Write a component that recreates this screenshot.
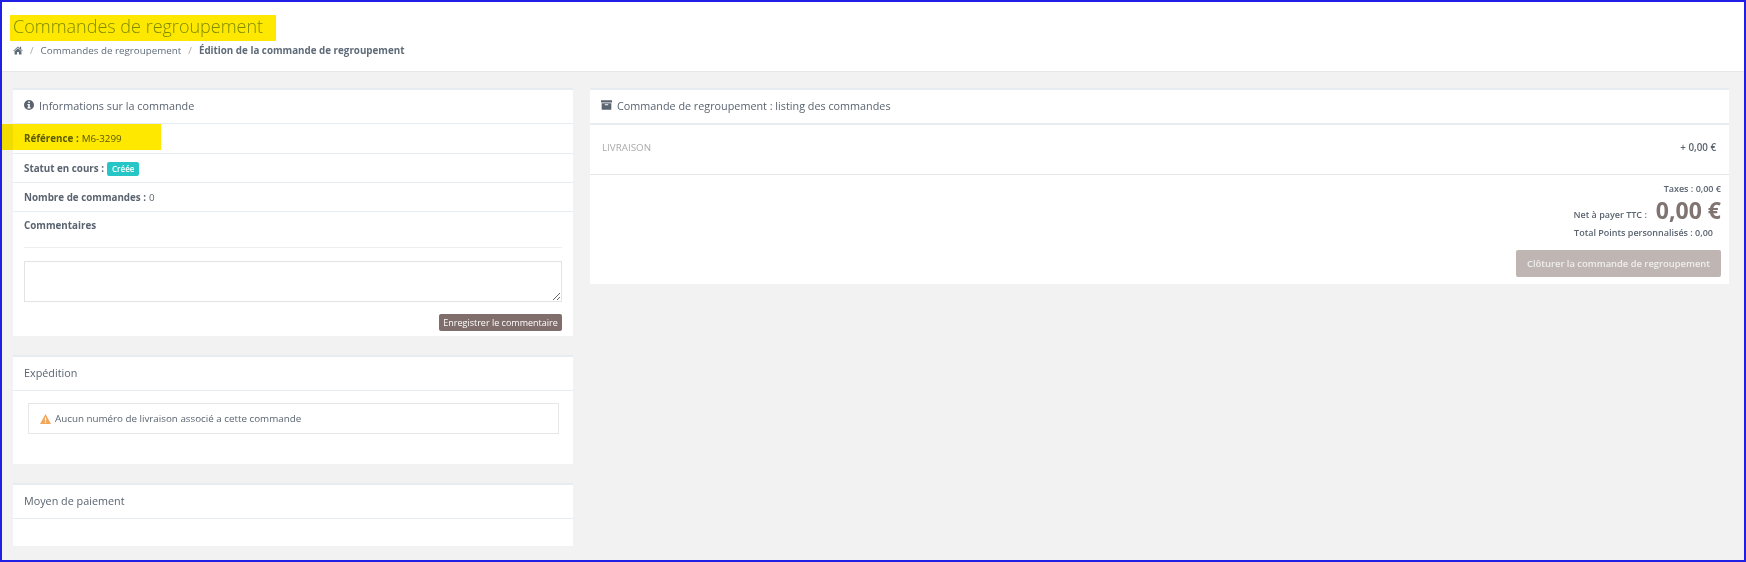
<script>
</script>

<div class="frame">
  <header class="page-head">
    <h1>Commandes de regroupement</h1>
    <span class="hl hl-title"></span>
    <nav class="crumbs">
      <svg class="home" viewBox="0 0 16 14" width="10" height="9"><path fill="currentColor" d="M8 0.5 0.3 7.2l.8.9L8 2.2l6.900 5.900.8-.9L13 4.900V1h-2v2.200z M8 3.500 2.500 8.200V13.500h4V9.500h3v4h4V8.200z"/></svg>
      <i>/</i>
      <span>Commandes de regroupement</span>
      <i>/</i>
      <b>Édition de la commande de regroupement</b>
    </nav>
  </header>

  <main class="content">
    <div class="col-left">
      <section class="card info">
        <div class="card-head">
          <svg viewBox="0 0 16 16" width="10" height="10" class="ic"><path fill="currentColor" fill-rule="evenodd" d="M8 0a8 8 0 1 0 0 16A8 8 0 0 0 8 0zM6.700 2.500h2.600v2.300H6.700zM5.500 6.500h3.800v5.200h1.200v1.800h-5v-1.800h1.200V8.300H5.500z"/></svg>
          <span>Informations sur la commande</span>
        </div>
        <div class="row"><b>Référence :</b> M6-3299</div>
        <div class="row"><b>Statut en cours :</b> <span class="badge">Créée</span></div>
        <div class="row"><b>Nombre de commandes :</b> 0</div>
        <div class="comments">
          <b>Commentaires</b>
          <hr />
          <textarea></textarea>
          <div class="actions"><button class="save">Enregistrer le commentaire</button></div>
        </div>
      </section>

      <section class="card ship">
        <div class="card-head">Expédition</div>
        <div class="ship-body">
          <div class="alert">
            <svg viewBox="0 0 18 16" width="11" height="10"><path fill="#f2a65a" fill-rule="evenodd" d="M9 0l9 16H0zM8 5.500v5.500h2V5.500zM8 12v2h2v-2z"/></svg>
            <span>Aucun numéro de livraison associé a cette commande</span>
          </div>
        </div>
      </section>

      <section class="card pay">
        <div class="card-head">Moyen de paiement</div>
        <div class="pay-body"></div>
      </section>
    </div>

    <div class="col-right">
      <section class="card listing">
        <div class="card-head thick">
          <svg viewBox="0 0 16 14" width="11" height="10" class="ic"><path fill="currentColor" fill-rule="evenodd" d="M0 0h16v3.500H0zM1 4.500h14V14H1zM5.500 6v1.500h5V6z"/></svg>
          <span>Commande de regroupement : listing des commandes</span>
        </div>
        <div class="delivery">
          <span class="lbl">LIVRAISON</span>
          <b class="amt">+ 0,00 €</b>
        </div>
        <div class="totals">
          <div class="taxes">Taxes : 0,00 €</div>
          <div class="net"><span>Net à payer TTC :</span><strong>0,00 €</strong></div>
          <div class="points">Total Points personnalisés : 0,00</div>
          <button class="close">Clôturer la commande de regroupement</button>
        </div>
      </section>
    </div>
  </main>
  <span class="hl hl-ref"></span>
</div>

<style>
  :global(body) {
    margin: 0;
    background: #f2f2f2;
  }
  .frame {
    position: relative;
    box-sizing: border-box;
    width: 1746px;
    height: 562px;
    border: 2px solid #1f1fe6;
    overflow: hidden;
    background: #f2f2f2;
    font-family: "Open Sans", sans-serif;
    font-size: 9.8px;
    color: #5a6470;
  }
  .page-head {
    position: relative;
    box-sizing: border-box;
    height: 70px;
    background: #fff;
    border-bottom: 1px solid #e7e7e7;
    padding: 10px 10px 0 11px;
  }
  h1 {
    margin: 0;
    font-size: 18px;
    font-weight: 300;
    line-height: 28px;
    color: #7f9aa0;
    white-space: nowrap;
  }
  .crumbs {
    display: flex;
    align-items: center;
    gap: 7px;
    margin-top: 2px;
    height: 16px;
    color: #5f6b78;
    white-space: nowrap;
  }
  .crumbs i {
    font-style: normal;
    color: #aaa;
  }
  .crumbs b {
    font-weight: 700;
  }
  .home {
    color: #5f6b78;
  }
  .hl {
    position: absolute;
    background: #ffe800;
    mix-blend-mode: multiply;
  }
  .hl-title {
    left: 8px;
    top: 13px;
    width: 266px;
    height: 26px;
  }
  .hl-ref {
    left: 0;
    top: 122px;
    width: 159px;
    height: 26px;
  }
  .content {
    display: flex;
    padding: 16px 0 0 11px;
    gap: 17px;
  }
  .col-left {
    width: 560px;
    display: flex;
    flex-direction: column;
    gap: 19px;
    flex: none;
  }
  .col-right {
    width: 1139px;
    flex: none;
  }
  .card {
    background: #fff;
    border-top: 2px solid #e7ecf1;
  }
  .card-head {
    box-sizing: border-box;
    display: flex;
    align-items: center;
    gap: 5px;
    height: 34px;
    padding: 0 0 3px 11px;
    border-bottom: 1px solid #e7ecf1;
    font-size: 10.8px;
    color: #5a6470;
  }
  .ic {
    flex: none;
  }
  .row {
    box-sizing: border-box;
    height: 29px;
    padding: 0 11px;
    display: flex;
    align-items: center;
    gap: 3px;
    border-bottom: 1px solid #e7ecf1;
  }
  .card-head + .row {
    height: 30px;
  }
  .row b,
  .comments b {
    font-weight: 700;
  }
  .badge {
    background: #26c6c6;
    color: #fff;
    font-size: 8px;
    font-weight: 600;
    padding: 2px 5px;
    border-radius: 2px;
    line-height: 10px;
    margin-top: 1px;
  }
  .comments {
    padding: 7px 11px 5px;
    line-height: 14px;
  }
  .comments hr {
    border: 0;
    border-top: 1px solid #eee;
    margin: 14px 0 13px;
  }
  textarea {
    display: block;
    box-sizing: border-box;
    width: 100%;
    height: 41px;
    border: 1px solid #e3e3e3;
    background: #fff;
    margin: 0;
    padding: 0;
  }
  .actions {
    display: flex;
    justify-content: flex-end;
    margin-top: 12px;
  }
  button {
    font-family: inherit;
    color: #fff;
    border: 0;
    cursor: pointer;
    white-space: nowrap;
  }
  .save {
    background: #7f6e6b;
    font-size: 9px;
    height: 17px;
    width: 123px;
    padding: 0;
    border-radius: 2px;
  }
  .ship-body {
    height: 73px;
    padding: 12px 14px 0 15px;
    box-sizing: border-box;
  }
  .alert {
    box-sizing: border-box;
    display: flex;
    align-items: center;
    gap: 4px;
    height: 31px;
    padding-left: 11px;
    border: 1px solid #e7e7e7;
  }
  .pay-body {
    height: 27px;
  }
  .delivery {
    box-sizing: border-box;
    display: flex;
    justify-content: space-between;
    height: 51px;
    padding: 16px 13px 0 12px;
    border-top: 1px solid #e7ecf1;
    border-bottom: 1px solid #e7e7e7;
    line-height: 14px;
  }
  .lbl {
    color: #aaa;
  }
  .amt {
    font-weight: 600;
    font-size: 9.8px;
  }
  .totals {
    display: flex;
    flex-direction: column;
    align-items: flex-end;
    padding: 7px 8px 7px 0;
    font-weight: 600;
    font-size: 9px;
  }
  .taxes {
    line-height: 14px;
  }
  .net {
    display: flex;
    align-items: flex-end;
    gap: 9px;
    height: 28px;
    line-height: 18px;
  }
  .net strong {
    font-size: 23px;
    line-height: 28px;
    font-weight: 700;
    color: #7f7470;
  }
  .points {
    line-height: 14px;
    margin-top: 2px;
    margin-right: 8px;
  }
  .close {
    margin-top: 10px;
    width: 205px;
    height: 27px;
    padding: 0;
    background: #bfb6b4;
    color: #eee;
    font-size: 9.4px;
    font-weight: 600;
    border-radius: 2px;
  }
</style>
